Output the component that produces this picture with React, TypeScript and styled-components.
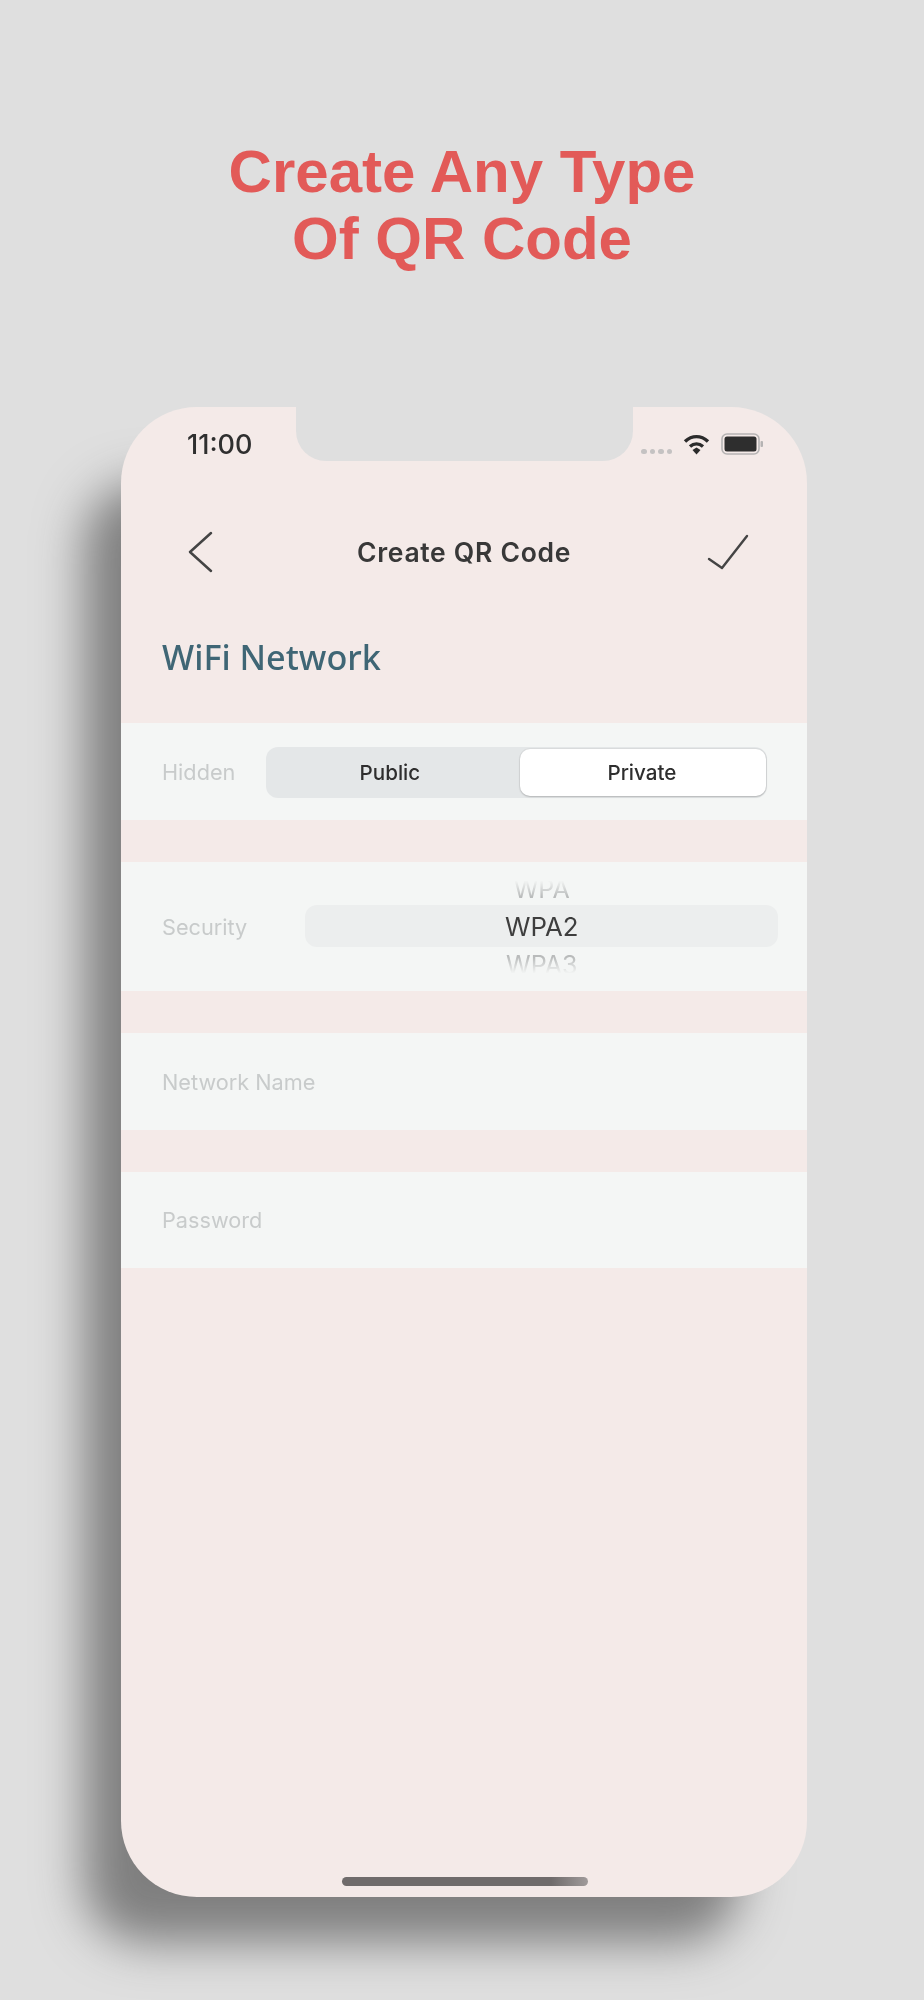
import React from 'react';
import styled, { createGlobalStyle } from 'styled-components';

const GlobalStyle = createGlobalStyle`
  html, body {
    margin: 0;
    padding: 0;
    background: #dfdfdf;
  }
`;

const Page = styled.div`
  width: 924px;
  height: 2000px;
  overflow: hidden;
  box-sizing: border-box;
  padding-top: 138px;
  background: #dfdfdf;
  filter: blur(0.4px);
`;

const Headline = styled.h1`
  margin: 0 0 135px;
  font-family: 'Liberation Sans', Arial, sans-serif;
  font-size: 60px;
  line-height: 67px;
  font-weight: 700;
  text-align: center;
  color: #e25a58;
`;

const Phone = styled.div`
  position: relative;
  width: 686px;
  height: 1490px;
  margin-left: 121px;
  border-radius: 76px;
  background: #f4eae8;
  box-shadow: -52px 61px 48px -15px #7f7f7f;
`;

const Notch = styled.div`
  position: absolute;
  top: 0;
  left: 175px;
  width: 337px;
  height: 54px;
  border-radius: 0 0 30px 30px;
  background: #dfdfdf;
`;

const StatusBar = styled.div`
  display: flex;
  align-items: center;
  justify-content: space-between;
  height: 30px;
  padding: 22px 44px 0 66px;
`;

const Clock = styled.span`
  font-family: Inter, sans-serif;
  font-size: 27px;
  font-weight: 500;
  color: #2f2f2f;
`;

const StatusIcons = styled.div`
  display: flex;
  align-items: center;
`;

const SignalDots = styled.div`
  display: flex;
  gap: 3px;
  margin: 15px 11px 0 0;
`;

const SignalDot = styled.i`
  width: 5.5px;
  height: 5.5px;
  border-radius: 50%;
  background: #c4c2c2;
`;

const NavBar = styled.div`
  display: flex;
  align-items: center;
  justify-content: space-between;
  margin-top: 71px;
  height: 44px;
  padding: 0 58px 0 66px;
`;

const NavSlot = styled.div<{ $align: string }>`
  display: flex;
  justify-content: ${(p) => p.$align};
  width: 42px;
`;

const NavTitle = styled.h2`
  margin: 0 8px 0 0;
  font-family: Inter, sans-serif;
  font-size: 26.5px;
  font-weight: 600;
  letter-spacing: 0.7px;
  color: #383838;
`;

const PageTitle = styled.h3`
  margin: 60px 0 0;
  padding-left: 41px;
  height: 89px;
  font-family: 'Noto Sans', sans-serif;
  font-size: 34.2px;
  line-height: 46px;
  font-weight: 500;
  color: #3f6675;
`;

const Band = styled.div<{ $height: number }>`
  display: flex;
  align-items: center;
  height: ${(p) => p.$height}px;
  margin-bottom: 42px;
  padding-left: 41px;
  background: #f4f6f5;
`;

const FieldLabel = styled.span`
  font-family: Inter, sans-serif;
  font-size: 21.7px;
  color: #c8cbcb;
`;

const Segmented = styled.div`
  display: flex;
  width: 501px;
  height: 51px;
  margin: 1px 0 0 31px;
  box-sizing: border-box;
  border-radius: 12px;
  background: #e4e7e8;
`;

const Segment = styled.div<{ $active?: boolean }>`
  display: flex;
  align-items: center;
  justify-content: center;
  box-sizing: border-box;
  flex: ${(p) => (p.$active ? '0 0 246px' : '1')};
  margin: ${(p) => (p.$active ? '2px 1px 2px 0' : '0')};
  padding-right: ${(p) => (p.$active ? '3px' : '7px')};
  border-radius: 10px;
  font-family: Inter, sans-serif;
  font-size: 20.6px;
  font-weight: 500;
  color: #2e2e2e;
  background: ${(p) => (p.$active ? '#ffffff' : 'transparent')};
  box-shadow: ${(p) => (p.$active ? '0 1px 2px rgba(0, 0, 0, 0.18), 0 0 0 1px rgba(0, 0, 0, 0.04)' : 'none')};
`;

const Picker = styled.div`
  position: relative;
  display: flex;
  flex-direction: column;
  align-items: center;
  justify-content: center;
  width: 473px;
  height: 100%;
  margin-left: 58px;
  overflow: hidden;
`;

const PickerHighlight = styled.div`
  position: absolute;
  top: 43px;
  left: 0;
  right: 0;
  height: 42px;
  border-radius: 12px;
  background: #eceeee;
`;

const PickerItem = styled.span<{ $selected?: boolean; $fade?: 'top' | 'bottom' }>`
  position: relative;
  height: 38px;
  font-family: Inter, sans-serif;
  font-size: ${(p) => (p.$selected ? 25.8 : 25)}px;
  line-height: 38px;
  color: ${(p) => (p.$selected ? '#3e3e3e' : '#b9bbbb')};
  mask-image: ${(p) =>
    p.$fade
      ? `linear-gradient(to ${p.$fade}, #000 30%, transparent 72%)`
      : 'none'};
`;

const HomeBar = styled.div`
  position: absolute;
  left: 221px;
  bottom: 11px;
  width: 246px;
  height: 9px;
  border-radius: 5px;
  background: linear-gradient(90deg, #6f6b6b 0%, #6f6b6b 85%, #a09b9b 100%);
`;

const WifiIcon = () => (
  <svg width="27" height="21" viewBox="0 0 27 21">
    <path d="M2 7.5C9 1 18 1 25 7.5" fill="none" stroke="#2b2b2b" strokeWidth="3.4" />
    <path d="M7 12.5C11 9 16 9 20 12.5" fill="none" stroke="#2b2b2b" strokeWidth="3.4" />
    <path d="M9.5 16L13.5 13.4L17.5 16L13.5 20.5Z" fill="#2b2b2b" />
  </svg>
);

const BatteryIcon = () => (
  <svg width="42" height="22" viewBox="0 0 42 22" style={{ marginLeft: 11 }}>
    <rect x="1" y="1" width="37" height="20" rx="5" fill="none" stroke="#b5b3b3" strokeWidth="1.6" />
    <rect x="3.5" y="3.5" width="32" height="15" rx="2.5" fill="#2e2e2e" />
    <rect x="39.5" y="8" width="2.5" height="6" rx="1" fill="#b5b3b3" />
  </svg>
);

const BackIcon = () => (
  <svg width="26" height="42" viewBox="0 0 26 42">
    <path d="M24 2L3 21L24 40" fill="none" stroke="#444444" strokeWidth="2.5" strokeLinecap="round" strokeLinejoin="round" />
  </svg>
);

const CheckIcon = () => (
  <svg width="42" height="36" viewBox="0 0 42 36">
    <path d="M2 25L15 34L40 2" fill="none" stroke="#444444" strokeWidth="2.4" strokeLinecap="round" strokeLinejoin="round" />
  </svg>
);

export default function App() {
  return (
    <Page>
      <GlobalStyle />
      <Headline>
        Create Any Type
        <br />
        Of QR Code
      </Headline>
      <Phone>
        <Notch />
        <StatusBar>
          <Clock>11:00</Clock>
          <StatusIcons>
            <SignalDots>
              <SignalDot />
              <SignalDot />
              <SignalDot />
              <SignalDot />
            </SignalDots>
            <WifiIcon />
            <BatteryIcon />
          </StatusIcons>
        </StatusBar>
        <NavBar>
          <NavSlot $align="flex-start">
            <BackIcon />
          </NavSlot>
          <NavTitle>Create QR Code</NavTitle>
          <NavSlot $align="flex-end">
            <CheckIcon />
          </NavSlot>
        </NavBar>
        <PageTitle>WiFi Network</PageTitle>
        <Band $height={97}>
          <FieldLabel>Hidden</FieldLabel>
          <Segmented>
            <Segment>Public</Segment>
            <Segment $active>Private</Segment>
          </Segmented>
        </Band>
        <Band $height={129}>
          <FieldLabel>Security</FieldLabel>
          <Picker>
            <PickerHighlight />
            <PickerItem $fade="top">WPA</PickerItem>
            <PickerItem $selected>WPA2</PickerItem>
            <PickerItem $fade="bottom">WPA3</PickerItem>
          </Picker>
        </Band>
        <Band $height={97}>
          <FieldLabel>Network Name</FieldLabel>
        </Band>
        <Band $height={96}>
          <FieldLabel>Password</FieldLabel>
        </Band>
        <HomeBar />
      </Phone>
    </Page>
  );
}
